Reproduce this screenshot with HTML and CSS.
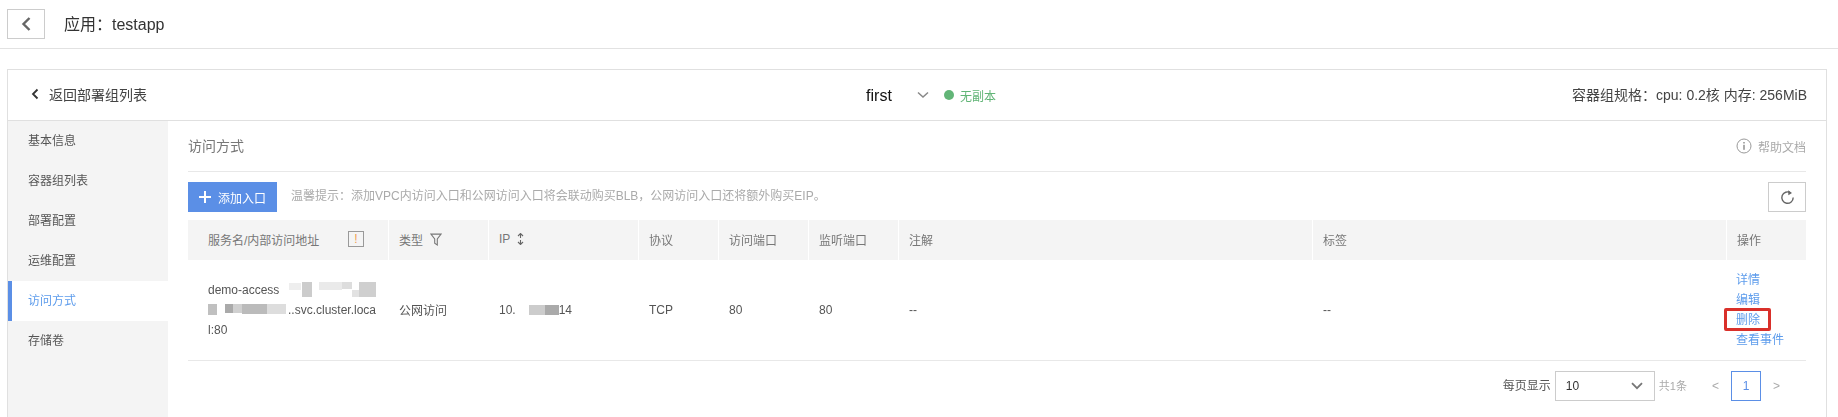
FILE: index.html
```html
<!DOCTYPE html>
<html lang="zh-CN">
<head>
<meta charset="utf-8">
<title>应用&#xFF1A;testapp</title>
<link rel="stylesheet" href="styles.css">
</head>
<body>
<div class="page">
  <header class="topbar">
    <button class="back-btn" aria-label="返回">
      <svg width="12" height="16" viewBox="0 0 12 16"><path d="M9.500 2 3.500 8 9.500 14" fill="none" stroke="#666" stroke-width="2.400"/></svg>
    </button>
    <h1 class="app-title">应用&#xFF1A;testapp</h1>
  </header>

  <section class="card">
    <div class="card-head">
      <a class="back-link">
        <svg width="8" height="12" viewBox="0 0 8 12"><path d="M6.500 1.500 2 6l4.500 4.500" fill="none" stroke="#333" stroke-width="1.800"/></svg>
        <span>返回部署组列表</span>
      </a>
      <div class="head-center">
        <span class="group-name">first</span>
        <svg class="chev" width="12" height="8" viewBox="0 0 12 8"><path d="M1 1.500 6 6 11 1.500" fill="none" stroke="#888" stroke-width="1.500"/></svg>
        <span class="dot"></span>
        <span class="status">无副本</span>
      </div>
      <div class="spec">容器组规格&#xFF1A;cpu: 0.2核 内存: 256MiB</div>
    </div>

    <div class="card-body">
      <nav class="side">
        <a class="side-item">基本信息</a>
        <a class="side-item">容器组列表</a>
        <a class="side-item">部署配置</a>
        <a class="side-item">运维配置</a>
        <a class="side-item active">访问方式</a>
        <a class="side-item">存储卷</a>
      </nav>

      <main class="content">
        <div class="section-head">
          <h2 class="section-title">访问方式</h2>
          <a class="help">
            <svg width="16" height="16" viewBox="0 0 16 16"><circle cx="8" cy="8" r="7" fill="none" stroke="#999" stroke-width="1"/><rect x="7.300" y="6.800" width="1.400" height="5" fill="#888"/><rect x="7.300" y="4" width="1.400" height="1.500" fill="#888"/></svg>
            <span>帮助文档</span>
          </a>
        </div>

        <div class="toolbar">
          <button class="add-btn">
            <svg width="12" height="12" viewBox="0 0 12 12"><path d="M6 0v12M0 6h12" stroke="#fff" stroke-width="2"/></svg>
            <span>添加入口</span>
          </button>
          <p class="hint">温馨提示&#xFF1A;添加VPC内访问入口和公网访问入口将会联动购买BLB&#xFF0C;公网访问入口还将额外购买EIP。</p>
          <button class="refresh-btn" aria-label="刷新">
            <svg width="15" height="15" viewBox="0 0 14 14"><path d="M9.800 2.600A5.300 5.300 0 1 0 12.300 7" fill="none" stroke="#666" stroke-width="1.300"/><path d="M7.600 0.200 11.200 2.700 7.800 4.900Z" fill="#666"/></svg>
          </button>
        </div>

        <div class="tbl-head">
          <div class="th th-first"><span>服务名/内部访问地址</span>
            <span class="warn-box">!</span>
          </div>
          <div class="th"><span>类型</span>
            <svg width="12" height="13" viewBox="0 0 11 12"><path d="M.8 1h9.400L6.700 5.500V11L4.300 9.500V5.500Z" fill="none" stroke="#777" stroke-width="1"/></svg>
          </div>
          <div class="th"><span>IP</span>
            <svg width="7" height="12" viewBox="0 0 7 12"><path d="M3.500 1v4M3.500 7v4M1 3l2.500-2.500L6 3M1 9l2.500 2.500L6 9" fill="none" stroke="#666" stroke-width="1.100"/></svg>
          </div>
          <div class="th">协议</div>
          <div class="th">访问端口</div>
          <div class="th">监听端口</div>
          <div class="th">注解</div>
          <div class="th">标签</div>
          <div class="th th-last">操作</div>
        </div>

        <div class="tbl-row">
          <div class="td td-first">
            <div class="addr-line">demo-access<svg class="mask" width="97" height="20" viewBox="0 0 97 20"><rect x="10" y="3" width="12" height="7" fill="#eee"/><rect x="23" y="2" width="10" height="15" fill="#ccc"/><rect x="40" y="2" width="23" height="8" fill="#eaeaea"/><rect x="63" y="2" width="10" height="7" fill="#ddd"/><rect x="73" y="10" width="7" height="7" fill="#e2e2e2"/><rect x="80" y="2" width="17" height="15" fill="#cfcfcf"/></svg></div>
            <div class="addr-line"><svg class="mask" width="80" height="20" viewBox="0 0 80 20"><rect x="0" y="4" width="9" height="11" fill="#c0c0c0"/><rect x="17" y="4" width="8" height="9" fill="#aaa"/><rect x="25" y="4" width="9" height="9" fill="#d0d0d0"/><rect x="34" y="4" width="25" height="10" fill="#bbb"/><rect x="59" y="4" width="19" height="10" fill="#ddd"/></svg>..svc.cluster.loca</div>
            <div class="addr-line">l:80</div>
          </div>
          <div class="td">公网访问</div>
          <div class="td"><div class="ip">10.<svg class="mask" width="43" height="20" viewBox="0 0 43 20"><rect x="13" y="5" width="16" height="10" fill="#ccc"/><rect x="29" y="5" width="14" height="10" fill="#aaa"/></svg>14</div></div>
          <div class="td">TCP</div>
          <div class="td">80</div>
          <div class="td">80</div>
          <div class="td">--</div>
          <div class="td">--</div>
          <div class="td td-actions">
            <a>详情</a>
            <a>编辑</a>
            <a class="marked">删除</a>
            <a>查看事件</a>
          </div>
        </div>

        <div class="pager">
          <span class="pg-label">每页显示</span>
          <div class="pg-select"><span>10</span>
            <svg width="12" height="8" viewBox="0 0 12 8"><path d="M1 1.200 6 6.200 11 1.200" fill="none" stroke="#777" stroke-width="1.800"/></svg>
          </div>
          <span class="pg-total">共1条</span>
          <span class="pg-arrow">&lt;</span>
          <span class="pg-num">1</span>
          <span class="pg-arrow">&gt;</span>
        </div>
      </main>
    </div>
  </section>
</div>
</body>
</html>
```
FILE: styles.css
```css
* { box-sizing: border-box; margin: 0; padding: 0; }
html, body { height: 417px; overflow: hidden; background: #fff; }
body {
  font-family: "Liberation Sans", "Noto Sans CJK SC", sans-serif;
  font-size: 12px;
  color: #555;
}
.page { filter: blur(.35px); }
button { background: none; font: inherit; }
h1, h2 { font-weight: 400; }

.topbar {
  height: 49px;
  display: flex;
  align-items: center;
  padding: 0 7px;
  border-bottom: 1px solid #e2e2e2;
}
.back-btn {
  width: 38px; height: 30px;
  border: 1px solid #ccc;
  display: flex; align-items: center; justify-content: center;
}
.app-title { margin-left: 19px; padding-bottom: 2px; font-size: 16px; color: #333; }

.card {
  margin: 20px 11px 0 7px;
  border: 1px solid #e0e0e0;
  border-bottom: 0;
  height: 348px;
  display: flex; flex-direction: column;
}
.card-head {
  height: 51px;
  flex: none;
  border-bottom: 1px solid #e0e0e0;
  display: grid;
  grid-template-columns: 1fr auto 1fr;
  align-items: center;
  padding: 0 19px 0 23px;
}
.back-link { display: flex; align-items: center; gap: 10px; font-size: 14px; color: #444; padding-bottom: 2px; }
.head-center { display: flex; align-items: center; margin-left: 24px; }
.group-name { font-size: 16px; color: #111; padding-top: 2px; }
.chev { margin-left: 25px; }
.dot { width: 10px; height: 10px; border-radius: 50%; background: #62b577; margin-left: 15px; }
.status { margin-left: 6px; color: #62b577; }
.spec { justify-self: end; font-size: 14px; color: #444; padding-bottom: 2px; }

.card-body { flex: 1; display: flex; min-height: 0; }
.side { width: 160px; flex: none; background: #f4f4f4; }
.side-item {
  display: flex; align-items: center;
  height: 40px;
  padding: 0 0 3px 20px;
  color: #555;
}
.side-item.active {
  background: #fff;
  color: #5d9cec;
  border-left: 4px solid #5b8fe6;
  padding-left: 16px;
}

.content { flex: 1; padding: 0 20px; min-width: 0; }
.section-head {
  height: 51px;
  display: flex; align-items: center; justify-content: space-between;
  border-bottom: 1px solid #e8e8e8;
}
.section-title { font-size: 14px; color: #777; padding-bottom: 3px; }
.help { display: flex; align-items: center; gap: 6px; color: #aaa; }

.toolbar { display: flex; align-items: center; margin-top: 10px; height: 30px; }
.add-btn {
  width: 89px; height: 30px;
  border: 0;
  background: #5b8fe6;
  color: #fff;
  display: flex; align-items: center;
  padding-left: 11px; gap: 7px;
}
.hint { margin-left: 14px; color: #aaa; flex: 1; padding-bottom: 5px; }
.refresh-btn {
  width: 38px; height: 30px;
  border: 1px solid #ccc;
  display: flex; align-items: center; justify-content: center;
}

.tbl-head, .tbl-row {
  display: grid;
  grid-template-columns: 201px 100px 150px 80px 90px 90px 414px 414px 79px;
}
.tbl-head { margin-top: 8px; height: 40px; }
.th {
  background: #f4f4f4;
  border-right: 1px solid #fff;
  padding: 0 0 2px 10px;
  display: flex; align-items: center; gap: 7px;
  color: #777;
}
.th-first { padding-left: 20px; gap: 0; justify-content: space-between; padding-right: 24px; }
.th-last { border-right: 0; padding-left: 10px; }
.warn-box {
  width: 16px; height: 16px;
  border: 1px solid #999;
  color: #f0a050;
  display: flex; align-items: center; justify-content: center;
}

.tbl-row { height: 101px; border-bottom: 1px solid #e8e8e8; }
.td { display: flex; align-items: center; padding: 0 0 1px 10px; color: #555; }
.td-first { display: block; padding: 20px 0 0 20px; }
.addr-line { height: 20px; line-height: 20px; white-space: nowrap; display: flex; align-items: center; }
.mask { flex: none; }
.ip { display: flex; align-items: center; }
.td-actions {
  display: flex; flex-direction: column; align-items: flex-start; justify-content: center;
  line-height: 20px;
  padding-left: 9px;
}
.td-actions a { color: #5d9cec; height: 20px; white-space: nowrap; position: relative; }
.marked::after {
  content: "";
  box-sizing: border-box;
  position: absolute;
  left: -12px; top: -2px;
  width: 47px; height: 23px;
  border: 3px solid #d9302a;
  border-radius: 2px;
}

.pager {
  display: flex; align-items: flex-start; justify-content: flex-end;
  padding-top: 10px;
  padding-right: 26px;
}
.pager > span:not(.pg-num) { line-height: 30px; }
.pg-label { color: #555; margin-right: 4px; }
.pg-select {
  width: 100px; height: 30px;
  border: 1px solid #ccc;
  display: flex; align-items: center; justify-content: space-between;
  padding: 0 11px 0 10px;
  color: #333;
}
.pg-total { color: #aaa; font-size: 11px; margin-left: 4px; margin-right: 25px; }
.pg-arrow { color: #aaa; }
.pg-num {
  width: 30px; height: 30px;
  border: 1px solid #5b8fe6;
  color: #5b8fe6;
  display: flex; align-items: center; justify-content: center;
  margin: 0 12px;
}
```
